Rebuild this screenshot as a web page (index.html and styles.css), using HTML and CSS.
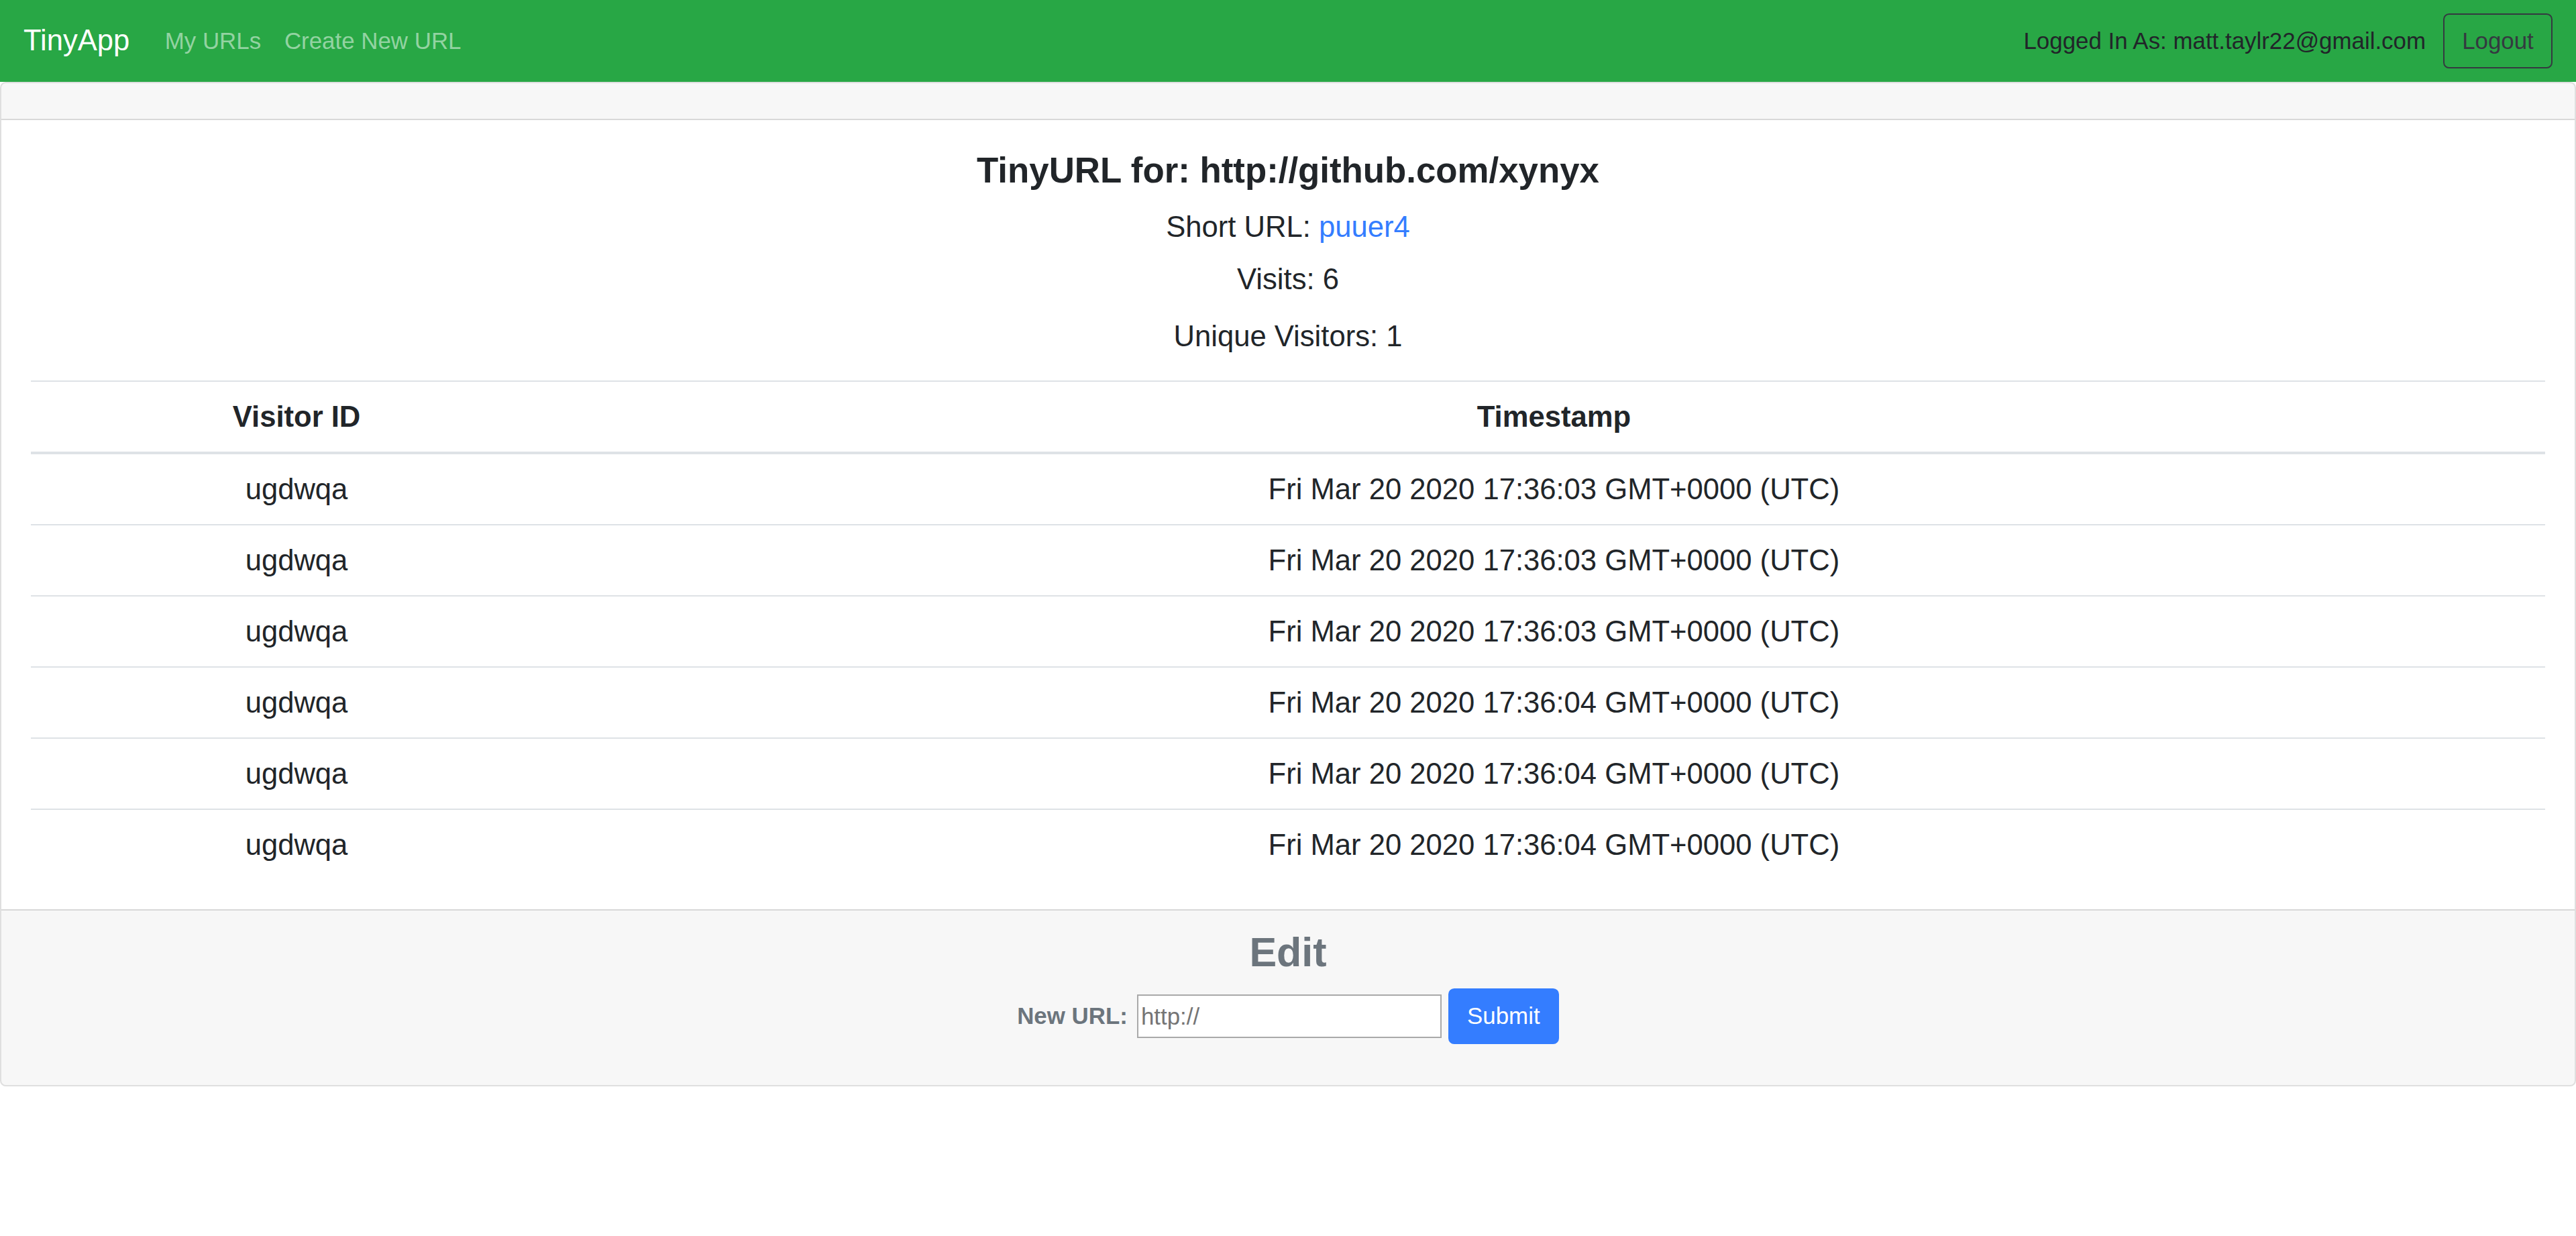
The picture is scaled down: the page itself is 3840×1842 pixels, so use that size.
FILE: index.html
```html
<!DOCTYPE html>
<html lang="en">
<head>
<meta charset="utf-8">
<title>TinyApp - URL</title>
<link rel="stylesheet" href="styles.css">
</head>
<body>
<nav class="navbar">
  <a class="brand" href="#">TinyApp</a>
  <ul class="nav-links">
    <li><a class="nav-link" href="#">My URLs</a></li>
    <li><a class="nav-link" href="#">Create New URL</a></li>
  </ul>
  <div class="user">
    <span class="user-text">Logged In As: matt.taylr22@gmail.com</span>
    <button class="btn btn-outline" type="button">Logout</button>
  </div>
</nav>
<main class="card">
  <div class="card-header"></div>
  <div class="card-body">
    <h4 class="title">TinyURL for: http://github.com/xynyx</h4>
    <h5 class="stat">Short URL: <a class="short-link" href="#">puuer4</a></h5>
    <h5 class="stat">Visits: 6</h5>
    <p class="stat-p">Unique Visitors: 1</p>
    <table class="visits">
      <thead>
        <tr><th class="col-id">Visitor ID</th><th>Timestamp</th></tr>
      </thead>
      <tbody>
        <tr><td>ugdwqa</td><td>Fri Mar 20 2020 17:36:03 GMT+0000 (UTC)</td></tr>
        <tr><td>ugdwqa</td><td>Fri Mar 20 2020 17:36:03 GMT+0000 (UTC)</td></tr>
        <tr><td>ugdwqa</td><td>Fri Mar 20 2020 17:36:03 GMT+0000 (UTC)</td></tr>
        <tr><td>ugdwqa</td><td>Fri Mar 20 2020 17:36:04 GMT+0000 (UTC)</td></tr>
        <tr><td>ugdwqa</td><td>Fri Mar 20 2020 17:36:04 GMT+0000 (UTC)</td></tr>
        <tr><td>ugdwqa</td><td>Fri Mar 20 2020 17:36:04 GMT+0000 (UTC)</td></tr>
      </tbody>
    </table>
  </div>
  <div class="card-footer">
    <h3 class="edit-title">Edit</h3>
    <form class="edit-form">
      <label class="edit-label" for="longURL">New URL:</label>
      <input class="edit-input" id="longURL" type="text" placeholder="http://">
      <button class="btn btn-primary" type="submit">Submit</button>
    </form>
  </div>
</main>
</body>
</html>
```
FILE: styles.css
```css
* { box-sizing: border-box; }

html, body {
  margin: 0;
  padding: 0;
  background: #ffffff;
}

body {
  font-family: "Liberation Sans", Arial, sans-serif;
  font-size: 34.88px;
  line-height: 1.5;
  color: #212529;
}

a { text-decoration: none; }

h3, h4, h5, p { margin: 0; }

/* ---------- navbar ---------- */
.navbar {
  display: flex;
  align-items: center;
  height: 122px;
  padding: 0 35px;
  background: #28a745;
}

.brand {
  font-size: 43.6px;
  line-height: 1.5;
  color: #ffffff;
  margin-right: 35px;
  white-space: nowrap;
}

.nav-links {
  display: flex;
  list-style: none;
  margin: 0;
  padding: 0;
}

.nav-link {
  display: block;
  padding: 17.4px 17.4px;
  color: rgba(255, 255, 255, 0.5);
  white-space: nowrap;
}

.user {
  margin-left: auto;
  display: flex;
  align-items: center;
}

.user-text {
  color: #212529;
  white-space: nowrap;
}

.btn {
  display: inline-block;
  font-family: inherit;
  font-size: 34.88px;
  line-height: 52.3px;
  padding: 13.1px 26.2px;
  border: 2.18px solid transparent;
  border-radius: 8.7px;
  background: transparent;
  cursor: pointer;
  white-space: nowrap;
}

.btn-outline {
  margin-left: 26px;
  color: #343a40;
  border-color: #343a40;
}

.btn-primary {
  color: #ffffff;
  background: #347dff;
  border-color: #347dff;
}

/* ---------- card ---------- */
.card {
  display: block;
  border: 2.18px solid rgba(0, 0, 0, 0.125);
  border-radius: 8.7px;
  background: #ffffff;
}

.card-header {
  height: 54.5px;
  background: rgba(0, 0, 0, 0.03);
  border-bottom: 2.18px solid rgba(0, 0, 0, 0.125);
  border-radius: 6.5px 6.5px 0 0;
}

.card-body {
  padding: 43.6px;
  text-align: center;
}

.title {
  font-size: 52.8px;
  font-weight: 700;
  line-height: 1.2;
  margin-bottom: 26.2px;
}

.stat {
  font-size: 43.6px;
  font-weight: 400;
  line-height: 1.2;
  margin-bottom: 26.2px;
}

.short-link { color: #347dff; }

.stat-p {
  font-size: 43.6px;
  line-height: 1.5;
  margin-bottom: 33px;
}

/* ---------- table ---------- */
.visits {
  width: 100%;
  border-collapse: collapse;
  text-align: center;
  margin: 0;
  font-size: 43.6px;
}

.visits th,
.visits td {
  padding: 26px;
  line-height: 52px;
  border-top: 2px solid #dee2e6;
  vertical-align: top;
}

.visits thead th {
  font-weight: 700;
  vertical-align: bottom;
  border-bottom: 4px solid #dee2e6;
}

.col-id { width: 21.15%; }

/* ---------- footer ---------- */
.card-footer {
  padding: 26.2px 43.6px;
  background: rgba(0, 0, 0, 0.03);
  border-top: 2.18px solid rgba(0, 0, 0, 0.125);
  border-radius: 0 0 6.5px 6.5px;
  text-align: center;
}

.edit-title {
  font-size: 61px;
  font-weight: 700;
  line-height: 1.2;
  color: #6c757d;
  margin-bottom: 17.4px;
}

.edit-form {
  display: flex;
  justify-content: center;
  align-items: center;
  gap: 10px;
  margin-bottom: 34.9px;
}

.edit-label {
  font-weight: 700;
  color: #6c757d;
  margin-right: 4px;
}

.edit-input {
  width: 454px;
  height: 65px;
  padding: 0 4px;
  font-family: inherit;
  font-size: 34.88px;
  color: #495057;
  background: #ffffff;
  border: 2px solid #a9a9a9;
  border-radius: 0;
  outline: none;
}

.edit-input::placeholder { color: #757575; }
```
